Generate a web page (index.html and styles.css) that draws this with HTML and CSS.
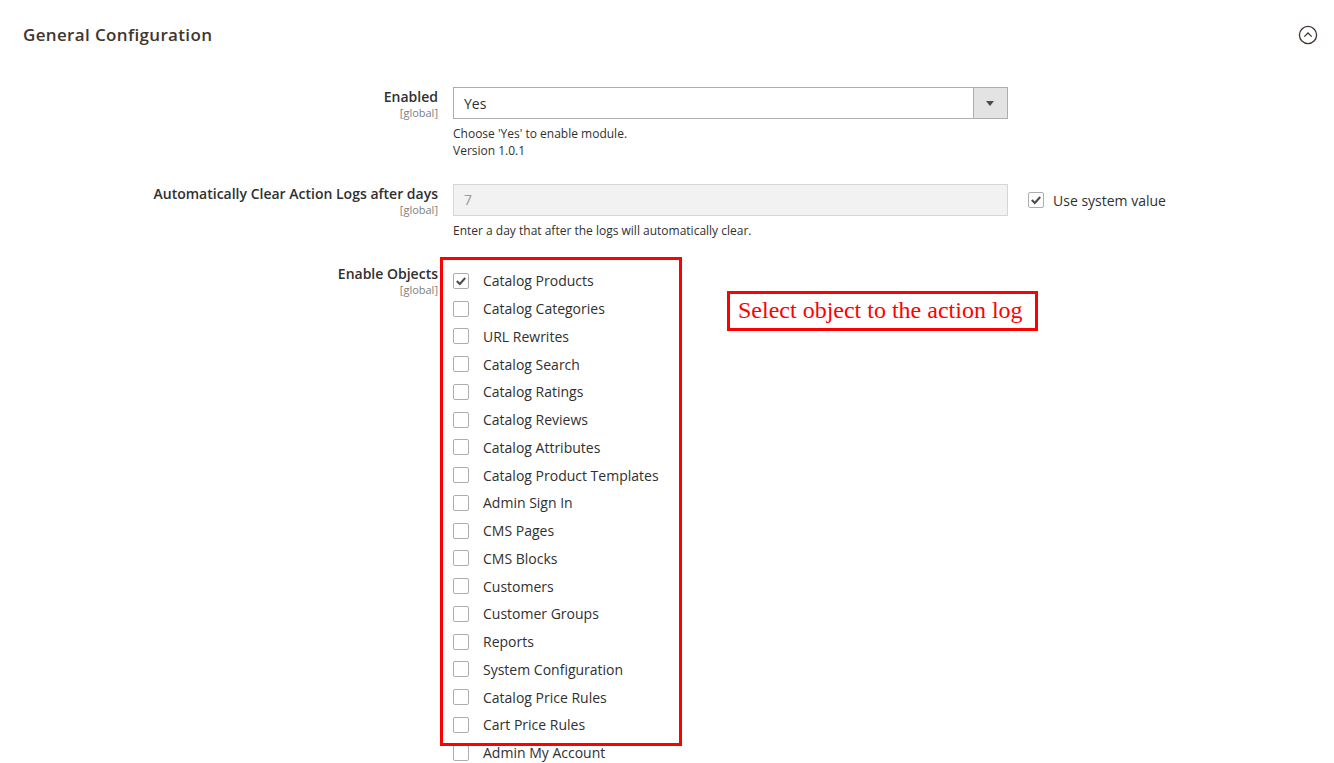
FILE: index.html
```html
<!DOCTYPE html>
<html lang="en">
<head>
    <meta charset="UTF-8">
    <title>General Configuration</title>
    <link rel="stylesheet" href="styles.css">
</head>
<body>
    <div class="section">
        <div class="section-head">
            <h2 class="section-title">General Configuration</h2>
            <span class="collapse-icon">
                <svg width="20" height="20" viewBox="0 0 20 20">
                    <circle cx="10" cy="10" r="8.6" fill="none" stroke="#41362f" stroke-width="1.3"/>
                    <path d="M6.3 11.6 L10 8 L13.7 11.6" fill="none" stroke="#41362f" stroke-width="1.3"/>
                </svg>
            </span>
        </div>

        <div class="fieldset">
            <div class="field-row">
                <div class="field-label">
                    <label>Enabled</label>
                    <span class="scope">[global]</span>
                </div>
                <div class="field-value">
                    <div class="select-box">
                        <span class="select-text">Yes</span>
                        <span class="select-arrow"></span>
                    </div>
                    <p class="note">Choose 'Yes' to enable module.<br>Version 1.0.1</p>
                </div>
            </div>

            <div class="field-row">
                <div class="field-label">
                    <label>Automatically Clear Action Logs after days</label>
                    <span class="scope">[global]</span>
                </div>
                <div class="field-value">
                    <div class="text-input disabled">7</div>
                    <p class="note">Enter a day that after the logs will automatically clear.</p>
                </div>
                <div class="field-default">
                    <span class="checkbox checked"><svg width="16" height="16" viewBox="0 0 16 16"><path d="M3.8 8 L6.8 11 L12.2 5" fill="none" stroke="#514943" stroke-width="2"/></svg></span>
                    <span>Use system value</span>
                </div>
            </div>

            <div class="field-row">
                <div class="field-label">
                    <label>Enable Objects</label>
                    <span class="scope">[global]</span>
                </div>
                <div class="field-value objects">
                    <ul class="check-list">
                        <li><span class="checkbox checked"><svg width="16" height="16" viewBox="0 0 16 16"><path d="M3.8 8 L6.8 11 L12.2 5" fill="none" stroke="#514943" stroke-width="2"/></svg></span>Catalog Products</li>
                        <li><span class="checkbox"></span>Catalog Categories</li>
                        <li><span class="checkbox"></span>URL Rewrites</li>
                        <li><span class="checkbox"></span>Catalog Search</li>
                        <li><span class="checkbox"></span>Catalog Ratings</li>
                        <li><span class="checkbox"></span>Catalog Reviews</li>
                        <li><span class="checkbox"></span>Catalog Attributes</li>
                        <li><span class="checkbox"></span>Catalog Product Templates</li>
                        <li><span class="checkbox"></span>Admin Sign In</li>
                        <li><span class="checkbox"></span>CMS Pages</li>
                        <li><span class="checkbox"></span>CMS Blocks</li>
                        <li><span class="checkbox"></span>Customers</li>
                        <li><span class="checkbox"></span>Customer Groups</li>
                        <li><span class="checkbox"></span>Reports</li>
                        <li><span class="checkbox"></span>System Configuration</li>
                        <li><span class="checkbox"></span>Catalog Price Rules</li>
                        <li><span class="checkbox"></span>Cart Price Rules</li>
                        <li><span class="checkbox"></span>Admin My Account</li>
                    </ul>
                    <div class="highlight-box"></div>
                    <div class="callout">Select object to the action log</div>
                </div>
            </div>
        </div>
    </div>
</body>
</html>
```

FILE: styles.css
```css
body {
    margin: 0;
    font-family: "Open Sans", "Liberation Sans", sans-serif;
    font-size: 14px;
    color: #303030;
    background-color: #fff;
}

.section-head {
    display: flex;
    justify-content: space-between;
    align-items: center;
    padding: 24px 16px 0 23px;
}

.section-title {
    margin: 0;
    font-size: 17px;
    line-height: 22px;
    font-weight: 600;
    letter-spacing: 0.35px;
    color: #41362f;
}

.collapse-icon {
    display: block;
    width: 20px;
    height: 20px;
}

.fieldset {
    margin-top: 41px;
}

.field-row {
    display: flex;
    align-items: flex-start;
    margin-bottom: 25px;
}

.field-label {
    width: 438px;
    text-align: right;
}

.field-label label {
    display: block;
    font-weight: 600;
    line-height: 19px;
}

.scope {
    display: block;
    font-size: 11px;
    line-height: 13px;
    color: #808080;
}

.field-value {
    width: 555px;
    margin-left: 15px;
}

.select-box {
    display: flex;
    height: 32px;
    border: 1px solid #adadad;
    box-sizing: border-box;
    background-color: #fff;
}

.select-text {
    flex: 1;
    padding: 1px 0 0 10px;
    line-height: 30px;
}

.select-arrow {
    width: 33px;
    border-left: 1px solid #adadad;
    background-color: #e3e3e3;
    position: relative;
}

.select-arrow::after {
    content: "";
    position: absolute;
    left: 12px;
    top: 13px;
    border-left: 4px solid transparent;
    border-right: 4px solid transparent;
    border-top: 5px solid #514943;
}

.text-input {
    height: 32px;
    box-sizing: border-box;
    border: 1px solid #d6d6d6;
    padding-left: 10px;
    line-height: 30px;
}

.text-input.disabled {
    background-color: #f2f2f2;
    color: #999;
}

.note {
    margin: 6px 0 0;
    font-size: 12px;
    line-height: 17px;
}

.field-default {
    display: flex;
    align-items: center;
    margin-left: 20px;
    height: 32px;
}

.field-default .checkbox {
    margin-right: 9px;
}

.checkbox {
    display: inline-block;
    width: 16px;
    height: 16px;
    box-sizing: border-box;
    border: 1px solid #adadad;
    border-radius: 2px;
    background-color: #fff;
    position: relative;
}

.checkbox svg {
    position: absolute;
    left: -1px;
    top: -1px;
}

.objects {
    position: relative;
}

.check-list {
    list-style: none;
    margin: 0;
    padding: 3px 0 0;
}

.check-list li {
    display: flex;
    align-items: center;
    height: 27.75px;
}

.check-list .checkbox {
    margin-right: 14px;
}

.highlight-box {
    position: absolute;
    left: -13px;
    top: -7px;
    width: 242px;
    height: 489px;
    box-sizing: border-box;
    border: 3px solid #f00;
}

.callout {
    position: absolute;
    left: 274px;
    top: 27px;
    width: 311px;
    height: 40px;
    box-sizing: border-box;
    border: 3px solid #f00;
    padding-left: 8px;
    font-family: "Liberation Serif", "Times New Roman", serif;
    font-size: 24px;
    line-height: 33px;
    color: #f00;
    white-space: nowrap;
}
```
